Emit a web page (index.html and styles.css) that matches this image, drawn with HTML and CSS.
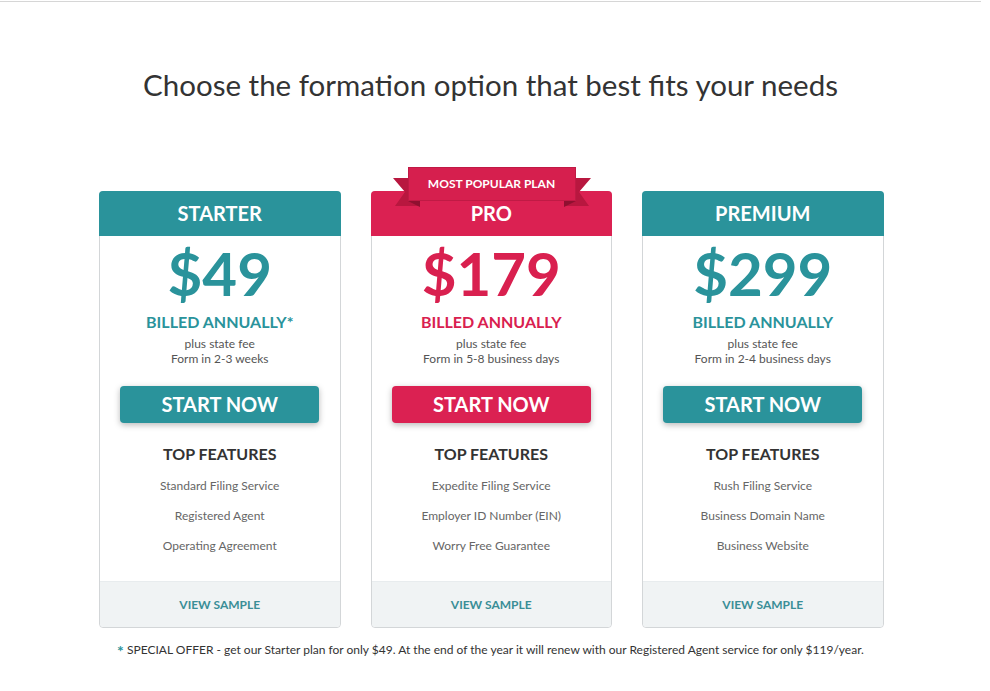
FILE: index.html
```html
<!DOCTYPE html>
<html lang="en">
<head>
<meta charset="utf-8">
<title>Pricing</title>
<link rel="stylesheet" href="styles.css">
</head>
<body>
<div class="page">
  <div class="topline"></div>
  <h1 class="title">Choose the formation option that best fits your needs</h1>
  <div class="plans">
    <div class="card">
      <div class="card-head teal">STARTER</div>
      <div class="price teal-text">$49</div>
      <div class="billed teal-text">BILLED ANNUALLY*</div>
      <div class="note">plus state fee<br>Form in 2-3 weeks</div>
      <a class="btn teal">START NOW</a>
      <div class="feat-title">TOP FEATURES</div>
      <ul class="feats">
        <li>Standard Filing Service</li>
        <li>Registered Agent</li>
        <li>Operating Agreement</li>
      </ul>
      <div class="card-foot">VIEW SAMPLE</div>
    </div>
    <div class="card popular">
      <svg class="ribbon" width="204" height="46" viewBox="0 0 204 46">
        <polygon points="3,14 30,14 30,42 5,42 15,28" fill="#b8173f"/>
        <polygon points="201,14 174,14 174,42 199,42 189,28" fill="#b8173f"/>
        <polygon points="18,37 30,37 30,43" fill="#8f1030"/>
        <polygon points="186,37 174,37 174,43" fill="#8f1030"/>
        <rect x="18.5" y="3.5" width="167" height="33" fill="#d61f4e" stroke="#c01a45" stroke-width="1"/>
      </svg>
      <div class="ribbon-text">MOST POPULAR PLAN</div>
      <div class="card-head pink">PRO</div>
      <div class="price pink-text">$179</div>
      <div class="billed pink-text">BILLED ANNUALLY</div>
      <div class="note">plus state fee<br>Form in 5-8 business days</div>
      <a class="btn pink">START NOW</a>
      <div class="feat-title">TOP FEATURES</div>
      <ul class="feats">
        <li>Expedite Filing Service</li>
        <li>Employer ID Number (EIN)</li>
        <li>Worry Free Guarantee</li>
      </ul>
      <div class="card-foot">VIEW SAMPLE</div>
    </div>
    <div class="card">
      <div class="card-head teal">PREMIUM</div>
      <div class="price teal-text">$299</div>
      <div class="billed teal-text">BILLED ANNUALLY</div>
      <div class="note">plus state fee<br>Form in 2-4 business days</div>
      <a class="btn teal">START NOW</a>
      <div class="feat-title">TOP FEATURES</div>
      <ul class="feats">
        <li>Rush Filing Service</li>
        <li>Business Domain Name</li>
        <li>Business Website</li>
      </ul>
      <div class="card-foot">VIEW SAMPLE</div>
    </div>
  </div>
  <p class="footnote"><span class="star">*</span> SPECIAL OFFER - get our Starter plan for only $49. At the end of the year it will renew with our Registered Agent service for only $119/year.</p>
</div>
</body>
</html>
```

FILE: styles.css
```css
* { box-sizing: border-box; }
html, body { margin: 0; padding: 0; background: #fff; }
body { font-family: Lato, "Open Sans", "Liberation Sans", sans-serif; color: #333; }
.page { width: 981px; padding-top: 1px; }
.topline { height: 1px; background: #d6d6d6; }
.title {
  margin: 65px 0 0;
  text-align: center;
  font-size: 29.5px;
  line-height: 36px;
  font-weight: 400;
  color: #333;
}
.plans {
  display: flex;
  gap: 30px;
  margin-top: 88px;
  padding-left: 99px;
}
.card {
  position: relative;
  width: 241.5px;
  border: 1px solid #d3d6d8;
  border-radius: 4px;
  display: flex;
  flex-direction: column;
  align-items: center;
  text-align: center;
}
.card-head {
  align-self: stretch;
  margin: -1px -1px 0;
  height: 45px;
  border-radius: 4px 4px 0 0;
  color: #fff;
  font-weight: 700;
  font-size: 20px;
  line-height: 45px;
}
.teal { background: #2a939b; }
.pink { background: #db2152; }
.teal-text { color: #2a939b; }
.pink-text { color: #d9204f; }
.price {
  margin-top: 7px;
  font-size: 60px;
  line-height: 60px;
  font-weight: 700;
}
.billed {
  margin-top: 9px;
  font-size: 16px;
  line-height: 20px;
  font-weight: 700;
}
.note {
  margin-top: 4px;
  font-size: 12px;
  line-height: 15px;
  color: #555;
}
.btn {
  display: block;
  margin-top: 20px;
  width: 199px;
  height: 37px;
  border-radius: 4px;
  color: #fff;
  font-weight: 700;
  font-size: 20px;
  line-height: 37px;
  box-shadow: 0 2px 6px rgba(0, 0, 0, 0.28);
}
.feat-title {
  margin-top: 21px;
  font-size: 16px;
  line-height: 20px;
  font-weight: 700;
  color: #333;
}
.feats {
  list-style: none;
  margin: 7px 0 0;
  padding: 0;
  font-size: 12px;
  line-height: 30px;
  color: #666;
}
.card-foot {
  align-self: stretch;
  margin-top: 20px;
  height: 46px;
  background: #f0f3f4;
  border-top: 1px solid #e8ecee;
  border-radius: 0 0 4px 4px;
  color: #3a8e97;
  font-weight: 700;
  font-size: 12px;
  line-height: 46px;
}
.ribbon {
  position: absolute;
  left: 18px;
  top: -28px;
}
.ribbon-text {
  position: absolute;
  left: 36px;
  top: -25px;
  width: 168px;
  height: 34px;
  line-height: 34px;
  color: #fff;
  font-size: 12px;
  font-weight: 700;
}
.footnote {
  margin: 14px 0 0;
  text-align: center;
  font-size: 12px;
  line-height: 16px;
  color: #333;
}
.star {
  color: #2a939b;
  font-size: 16px;
  font-weight: 700;
  vertical-align: -3px;
  line-height: 10px;
}
```
